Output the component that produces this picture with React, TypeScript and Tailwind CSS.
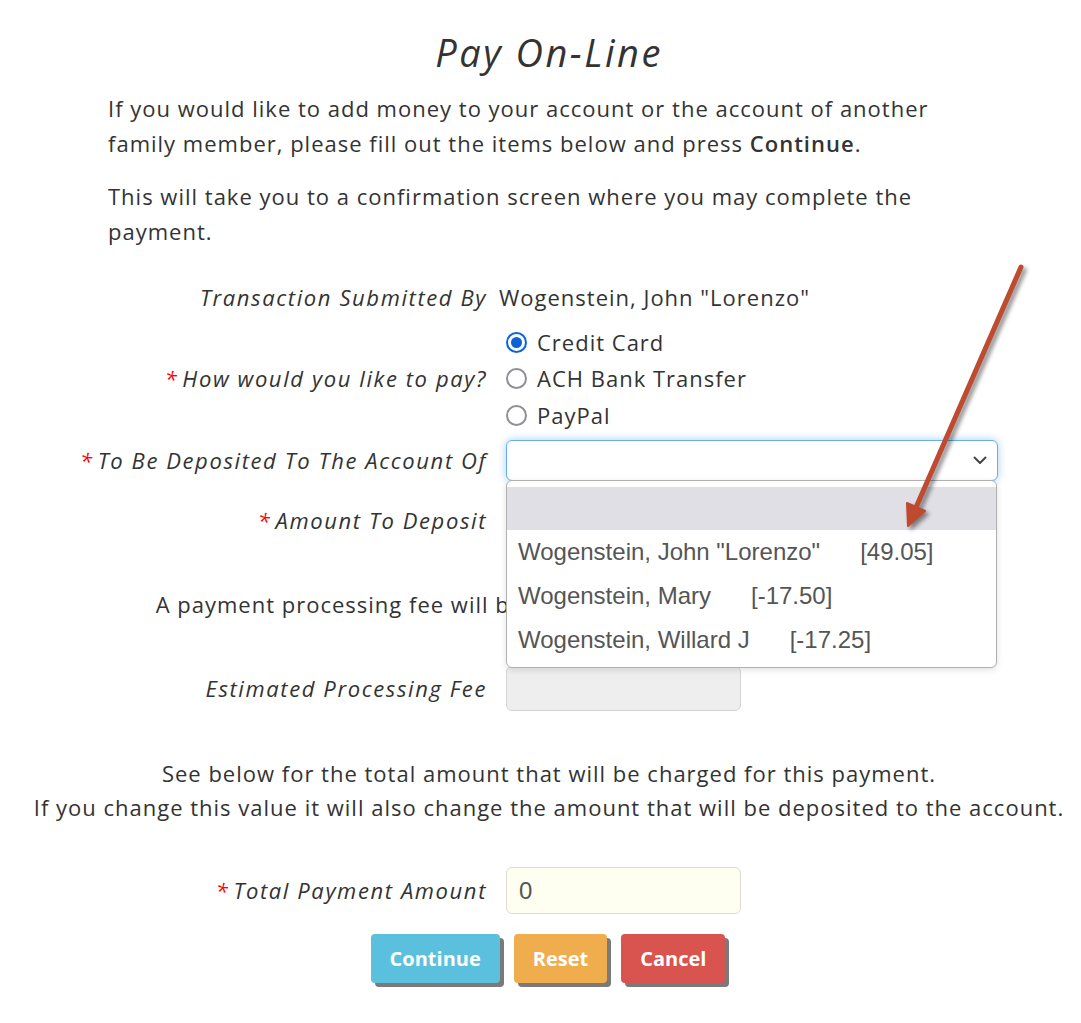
import React from "react";

const ACCOUNTS = [
  { name: 'Wogenstein, John "Lorenzo"', balance: "[49.05]" },
  { name: "Wogenstein, Mary", balance: "[-17.50]" },
  { name: "Wogenstein, Willard J", balance: "[-17.25]" },
];

function Label({ children, required }: { children: React.ReactNode; required?: boolean }) {
  return (
    <div className="text-right italic tracking-[1.6px] text-[#333]">
      {required && <span className="mr-[4px] text-[#ff0000]">*</span>}
      {children}
    </div>
  );
}

function Radio({ checked, label }: { checked?: boolean; label: string }) {
  return (
    <div className="flex h-[36.5px] items-center gap-[10px]">
      {checked ? (
        <span className="flex h-[21px] w-[21px] items-center justify-center rounded-full border-[2.5px] border-[#0b63d6] bg-white">
          <span className="h-[11px] w-[11px] rounded-full bg-[#0b63d6]" />
        </span>
      ) : (
        <span className="h-[21px] w-[21px] rounded-full border-2 border-[#8f8f96] bg-white" />
      )}
      <span>{label}</span>
    </div>
  );
}

function Button({ label, color }: { label: string; color: string }) {
  return (
    <button
      className={`h-[49px] rounded-[4px] px-[19px] text-[20px] font-bold tracking-normal text-white shadow-[4px_4px_0_#7a7a7a] ${color}`}
    >
      {label}
    </button>
  );
}

export default function App() {
  return (
    <div className="relative min-h-[1023px] w-full bg-white pt-[29px] font-['Open_Sans',sans-serif] text-[22px] leading-[35px] tracking-[1px] text-[#333]">
      <div className="ml-[18px] w-[1062px] pb-[20px]">
        <h1 className="text-center text-[38px] leading-[46px] italic tracking-[2.5px] text-[#333]">Pay On-Line</h1>

        <div className="mt-[16px] w-[920px] pl-[90px]">
          <p>
            If you would like to add money to your account or the account of another family member, please fill out
            the items below and press <b className="font-semibold">Continue</b>.
          </p>
          <p className="mt-[18px]">
            This will take you to a confirmation screen where you may complete the payment.
          </p>
        </div>

        <div className="mt-[31px] grid grid-cols-[469px_1fr] items-center gap-x-[19px]">
          <Label>Transaction Submitted By</Label>
          <div className="-ml-[7px]">Wogenstein, John "Lorenzo"</div>
        </div>

        <div className="mt-[9px] grid grid-cols-[469px_1fr] items-center gap-x-[19px]">
          <Label required>How would you like to pay?</Label>
          <div className="flex flex-col">
            <Radio checked label="Credit Card" />
            <Radio label="ACH Bank Transfer" />
            <Radio label="PayPal" />
          </div>
        </div>

        <div className="mt-[6px] grid grid-cols-[469px_1fr] items-center gap-x-[19px]">
          <Label required>To Be Deposited To The Account Of</Label>
          <div className="relative w-[492px]">
            <div className="flex h-[41px] items-center justify-end rounded-[6px] border border-[#66afe9] bg-white pr-[10px] shadow-[0_0_8px_rgba(102,175,233,0.6)]">
              <svg width="14" height="9" viewBox="0 0 14 9" fill="none">
                <path d="M1.5 1.5 L7 7 L12.5 1.5" stroke="#444" strokeWidth="2" strokeLinecap="round" strokeLinejoin="round" />
              </svg>
            </div>
            <div className="absolute left-0 top-[40px] z-10 h-[188px] w-[491px] rounded-[6px] border border-[#b0b0b0] bg-white pt-[6px] font-['Liberation_Sans',Arial,sans-serif] text-[24px] tracking-normal text-[#555] shadow-[0_2px_6px_rgba(0,0,0,0.12)]">
              <div className="h-[43px] bg-[#e0dfe5]" />
              {ACCOUNTS.map((a) => (
                <div key={a.name} className="flex h-[44px] items-center whitespace-pre pl-[11px]">
                  {a.name}
                  {"      "}
                  {a.balance}
                </div>
              ))}
            </div>
          </div>
        </div>

        <div className="mt-[17px] grid grid-cols-[469px_1fr] items-center gap-x-[19px]">
          <Label required>Amount To Deposit</Label>
          <div className="h-[45px] w-[235px] rounded-[6px] border border-[#ccc] bg-white" />
        </div>

        <p className="mt-[44px] text-center">
          A payment processing fee will be charged for all credit card payments.
        </p>

        <div className="mt-[44px] grid grid-cols-[469px_1fr] items-center gap-x-[19px]">
          <Label>Estimated Processing Fee</Label>
          <div className="h-[45px] w-[235px] rounded-[6px] border border-[#d4d4d4] bg-[#eeeeee]" />
        </div>

        <p className="mt-[45px] text-center leading-[34px]">
          See below for the total amount that will be charged for this payment.
          <br />
          If you change this value it will also change the amount that will be deposited to the account.
        </p>

        <div className="mt-[43px] grid grid-cols-[469px_1fr] items-center gap-x-[19px]">
          <Label required>Total Payment Amount</Label>
          <div className="flex h-[47px] w-[235px] items-center rounded-[6px] border border-[#dcdcd0] bg-[#fefff0] pl-[12px] font-['Liberation_Sans',Arial,sans-serif] text-[24px] tracking-normal text-[#555]">
            0
          </div>
        </div>

        <div className="mt-[20px] flex justify-center gap-[14px] pr-[2px]">
          <Button label="Continue" color="bg-[#5bc0de]" />
          <Button label="Reset" color="bg-[#f0ad4e]" />
          <Button label="Cancel" color="bg-[#d9534f]" />
        </div>
      </div>

      <svg
        className="pointer-events-none absolute left-0 top-0 z-20"
        width="1081"
        height="1023"
        viewBox="0 0 1081 1023"
        style={{ filter: "drop-shadow(3px 3px 2px rgba(0,0,0,0.45))" }}
      >
        <line x1="1021" y1="267" x2="914" y2="512" stroke="#be4a30" strokeWidth="5" strokeLinecap="round" />
        <polygon points="908,526 907,503 925,511" fill="#be4a30" stroke="#be4a30" strokeWidth="2" strokeLinejoin="round" />
      </svg>
    </div>
  );
}
